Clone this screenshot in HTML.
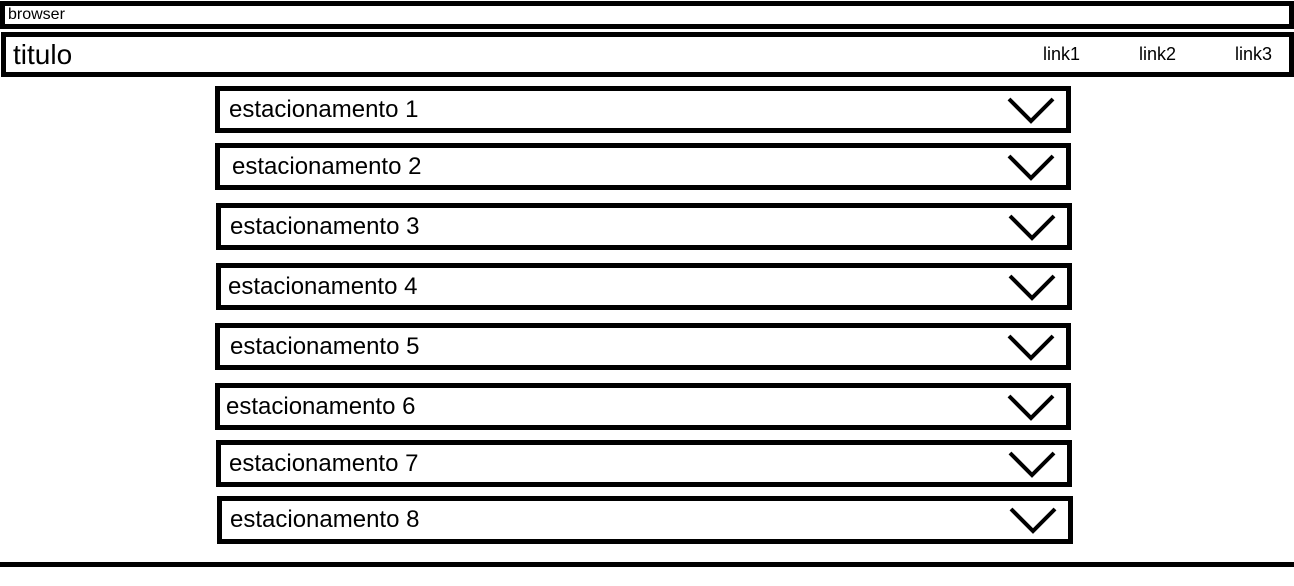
<!DOCTYPE html>
<html><head><style>
body{margin:0;width:1294px;height:586px;background:#fff;position:relative;overflow:hidden;font-family:"Liberation Sans",Arial,sans-serif;color:#000}
.b{position:absolute;box-sizing:border-box;border:5px solid #000;background:#fff}
.t{position:absolute;white-space:nowrap}
.it{position:absolute;box-sizing:border-box;border:5px solid #000;width:856px;height:47px}
.it span{position:absolute;top:5px;font-size:24px;line-height:28px}
.it svg{position:absolute;left:786px;top:3px}
</style></head><body>
<div class="b" style="left:0;top:1px;width:1294px;height:28px"></div>
<div class="t" style="left:8px;top:6px;font-size:16px">browser</div>
<div class="b" style="left:1px;top:32px;width:1293px;height:45px"></div>
<div class="t" style="left:13px;top:39px;font-size:28px">titulo</div>
<div class="t" style="left:1043px;top:44px;font-size:18px">link1</div>
<div class="t" style="left:1139px;top:44px;font-size:18px">link2</div>
<div class="t" style="left:1235px;top:44px;font-size:18px">link3</div>

<div class="it" style="left:215px;top:86px"><span style="left:9px">estacionamento 1</span><svg width="50" height="30"><path d="M3 5 L25 27 L47 5" fill="none" stroke="#000" stroke-width="4"/></svg></div>
<div class="it" style="left:215px;top:143px"><span style="left:12px">estacionamento 2</span><svg width="50" height="30"><path d="M3 5 L25 27 L47 5" fill="none" stroke="#000" stroke-width="4"/></svg></div>
<div class="it" style="left:216px;top:203px"><span style="left:9px">estacionamento 3</span><svg width="50" height="30"><path d="M3 5 L25 27 L47 5" fill="none" stroke="#000" stroke-width="4"/></svg></div>
<div class="it" style="left:216px;top:263px"><span style="left:7px">estacionamento 4</span><svg width="50" height="30"><path d="M3 5 L25 27 L47 5" fill="none" stroke="#000" stroke-width="4"/></svg></div>
<div class="it" style="left:215px;top:323px"><span style="left:10px">estacionamento 5</span><svg width="50" height="30"><path d="M3 5 L25 27 L47 5" fill="none" stroke="#000" stroke-width="4"/></svg></div>
<div class="it" style="left:215px;top:383px"><span style="left:6px">estacionamento 6</span><svg width="50" height="30"><path d="M3 5 L25 27 L47 5" fill="none" stroke="#000" stroke-width="4"/></svg></div>
<div class="it" style="left:216px;top:440px"><span style="left:8px">estacionamento 7</span><svg width="50" height="30"><path d="M3 5 L25 27 L47 5" fill="none" stroke="#000" stroke-width="4"/></svg></div>
<div class="it" style="left:217px;top:496px;height:48px"><span style="left:8px">estacionamento 8</span><svg width="50" height="30"><path d="M3 5 L25 27 L47 5" fill="none" stroke="#000" stroke-width="4"/></svg></div>

<div style="position:absolute;left:0;top:562px;width:1294px;height:5px;background:#000"></div>
</body></html>
